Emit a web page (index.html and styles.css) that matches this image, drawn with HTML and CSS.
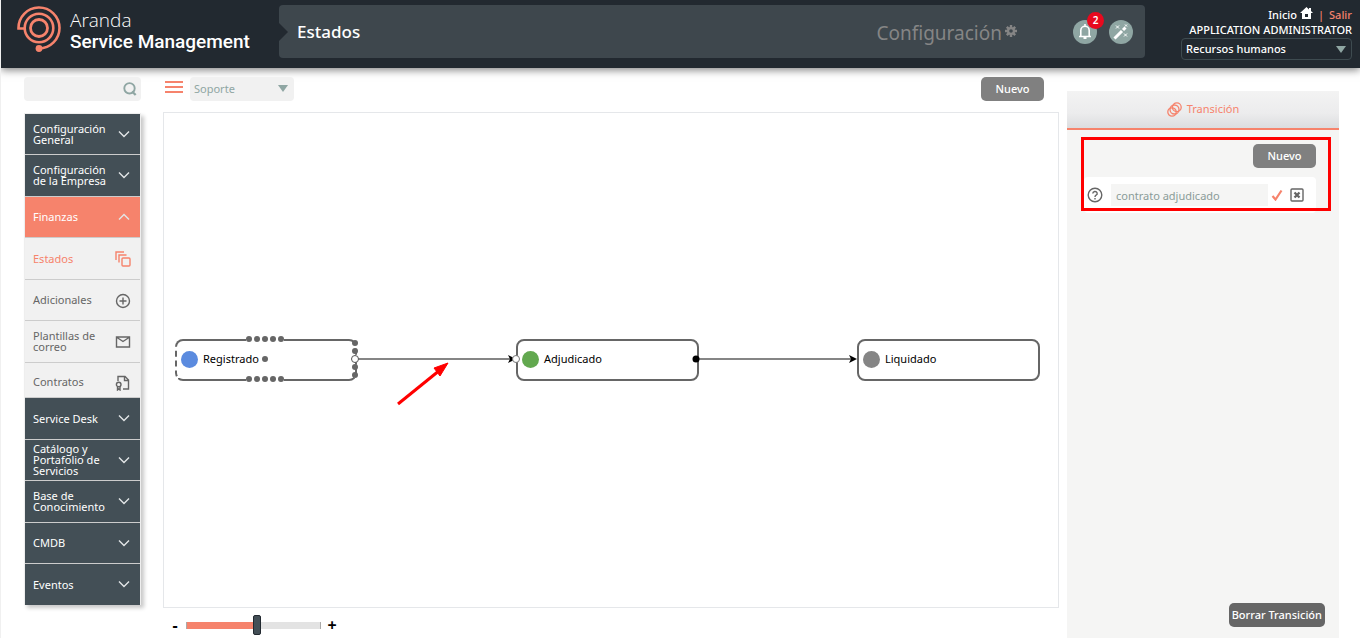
FILE: index.html
```html
<!DOCTYPE html>
<html lang="es">
<head>
<meta charset="utf-8">
<meta name="viewport" content="width=device-width, initial-scale=1">
<title>Aranda Service Management - Estados</title>
<link rel="stylesheet" href="styles.css">
</head>
<body>
<header class="header">
  <div class="brand">
    <svg class="brand-logo" viewBox="0 0 46 48" fill="none" stroke="#f6836c" stroke-width="2.600" aria-hidden="true">
      <circle cx="22" cy="22" r="8.500" stroke-width="2.800"/>
      <circle cx="22" cy="22" r="14.300"/>
      <path d="M8 22.500H1.500A20.500 20.500 0 1 1 22 42.500"/>
      <circle cx="22" cy="42.500" r="3.400" fill="#f6836c" stroke="none"/>
    </svg>
    <div class="brand-name"><span class="brand-light">Aranda</span><strong class="brand-bold">Service Management</strong></div>
  </div>
  <div class="titlebar">
    <h1 class="page-title">Estados</h1>
    <div class="section">Configuración
      <svg class="gear" viewBox="0 0 14 14" aria-hidden="true"><path d="M7 1v12M1 7h12M2.800 2.800l8.400 8.400M11.200 2.800l-8.400 8.400" stroke="#858585" stroke-width="2.400"/><circle cx="7" cy="7" r="4" fill="#858585"/><circle cx="7" cy="7" r="1.800" fill="#3e474d"/></svg>
    </div>
    <div class="tools">
      <button class="round" aria-label="Notificaciones">
        <svg viewBox="0 0 24 24" width="24" height="24" fill="none" stroke="#fff" stroke-width="1.600"><path d="M6 16.500h12M7.800 16V10.500a4.200 4.200 0 0 1 8.400 0V16M12 4v3"/><path d="M10.500 18h3" stroke-width="2"/></svg>
        <span class="badge">2</span>
      </button>
      <button class="round" aria-label="Asistente">
        <svg viewBox="0 0 24 24" width="24" height="24" fill="none" stroke="#fff"><path d="M5.500 18.500l7.500-7.500" stroke-width="3"/><path d="M14 10l2.500-2.500" stroke-width="3"/><path d="M7 5.500l3 3m0-3l-3 3M15 13.500l3 3m0-3l-3 3M16 4.500l2 2m0-2l-2 2" stroke-width="1"/></svg>
      </button>
    </div>
  </div>
  <div class="user">
    <div class="user-links"><a class="home" href="#">Inicio <svg width="13" height="12" viewBox="0 0 13 12" aria-hidden="true"><path d="M6.500 0L0 6h2v6h9V6h2l-2-2V1H9v1.500z" fill="#fff"/><path d="M5 7h3v3H5z" fill="#222930"/></svg></a><span class="sep">|</span><a class="exit" href="#">Salir</a></div>
    <div class="user-name">APPLICATION ADMINISTRATOR</div>
    <div class="select-wrap project">
      <select aria-label="Proyecto"><option>Recursos humanos</option></select>
      <svg class="caret" viewBox="0 0 10 7" aria-hidden="true"><path d="M0 0h10L5 7z" fill="#8fa6a3"/></svg>
    </div>
  </div>
</header>

<svg class="defs" aria-hidden="true"><symbol id="down" viewBox="0 0 12 8"><path d="M1 1.500l5 5 5-5" fill="none" stroke="currentColor" stroke-width="1.400"/></symbol></svg>

<div class="layout">
  <aside class="side">
    <label class="search">
      <input type="search" aria-label="Buscar">
      <svg width="14" height="14" viewBox="0 0 14 14" fill="none" stroke="#8fa6a3" aria-hidden="true"><circle cx="6.500" cy="6.300" r="5.200" stroke-width="1.900"/><path d="M9 9.500l3.700 3.500" stroke-width="2.400"/></svg>
    </label>
    <nav class="menu">
      <button class="item"><span>Configuración General</span><svg class="chev"><use href="#down"/></svg></button>
      <button class="item"><span>Configuración de la Empresa</span><svg class="chev"><use href="#down"/></svg></button>
      <button class="item open"><span>Finanzas</span><svg class="chev up"><use href="#down"/></svg></button>
      <a class="item sub current" href="#"><span>Estados</span><svg class="icon" viewBox="0 0 16 16"><path d="M1 9V1h8M4 11.500V4h7.500"/><rect x="7" y="7" width="8" height="8" rx="1"/></svg></a>
      <a class="item sub" href="#"><span>Adicionales</span><svg class="icon" viewBox="0 0 16 16"><circle cx="8" cy="8" r="6.500"/><path d="M8 4.500v7M4.500 8h7"/></svg></a>
      <a class="item sub" href="#"><span>Plantillas de correo</span><svg class="icon" viewBox="0 0 16 16"><path d="M1.500 3h13v10h-13zM2 3.500l6 4 6-4"/></svg></a>
      <a class="item sub short" href="#"><span>Contratos</span><svg class="icon" viewBox="0 0 16 16"><path d="M3 6V1.500h7l3.500 3.500v9H8M9.500 1.500V5.500h4"/><circle cx="3.700" cy="9.500" r="2.300"/><path d="M2.500 11.500V15l1.300-1L5 15v-3.500"/></svg></a>
      <button class="item"><span>Service Desk</span><svg class="chev"><use href="#down"/></svg></button>
      <button class="item"><span>Catálogo y Portafolio de Servicios</span><svg class="chev"><use href="#down"/></svg></button>
      <button class="item"><span>Base de Conocimiento</span><svg class="chev"><use href="#down"/></svg></button>
      <button class="item"><span>CMDB</span><svg class="chev"><use href="#down"/></svg></button>
      <button class="item"><span>Eventos</span><svg class="chev"><use href="#down"/></svg></button>
    </nav>
  </aside>

  <main class="main">
    <div class="toolbar">
      <button class="burger" aria-label="Menú"><svg width="18" height="13" viewBox="0 0 18 13"><path d="M0 1h18M0 6h18M0 11h18" stroke="#f6836c" stroke-width="2"/></svg></button>
      <div class="select-wrap support">
        <select aria-label="Modelo"><option>Soporte</option></select>
        <svg class="caret" viewBox="0 0 10 7" aria-hidden="true"><path d="M0 0h10L5 7z" fill="#8fa6a3"/></svg>
      </div>
      <button class="btn new-state">Nuevo</button>
    </div>
    <div class="canvas">
      <svg class="links" width="890" height="490" viewBox="0 0 890 490" aria-hidden="true">
        <path d="M191 246h160M532 246h158" stroke="#858585" stroke-width="2"/>
        <path d="M344 242l8 4-8 4 2-4zM685 242l8 4-8 4 2-4z" fill="#000"/>
        <path d="M234 291l42-34" stroke="#f00" stroke-width="3"/>
        <path d="M284 250l-8 13-6-8z" fill="#f00" stroke="#f00"/>
      </svg>
      <div class="node selected n1"><i class="dot blue"></i>Registrado</div>
      <div class="node n2"><i class="dot green"></i>Adjudicado</div>
      <div class="node n3"><i class="dot gray"></i>Liquidado</div>
      <svg class="links" width="890" height="490" viewBox="0 0 890 490" aria-hidden="true">
        <path d="M82 226h38M82 266h38" stroke="#fff" stroke-width="4"/>
        <g fill="#666">
          <circle cx="85" cy="226" r="3"/><circle cx="93" cy="226" r="3"/><circle cx="101" cy="226" r="3"/><circle cx="109" cy="226" r="3"/><circle cx="117" cy="226" r="3"/>
          <circle cx="85" cy="266" r="3"/><circle cx="93" cy="266" r="3"/><circle cx="101" cy="266" r="3"/><circle cx="109" cy="266" r="3"/><circle cx="117" cy="266" r="3"/>
          <circle cx="191" cy="230" r="3"/><circle cx="191" cy="238" r="3"/><circle cx="191" cy="254" r="3"/><circle cx="191" cy="262" r="3"/><circle cx="101" cy="246" r="3"/>
        </g>
        <circle cx="191" cy="246" r="3.500" fill="#fff" stroke="#555"/>
        <circle cx="352" cy="246" r="3.500" fill="#fff" stroke="#777"/>
        <circle cx="532" cy="246" r="3.500" fill="#000"/>
      </svg>
    </div>
    <div class="zoom">
      <button class="zoom-btn" aria-label="Alejar">-</button>
      <input class="range" type="range" min="0" max="100" value="53" aria-label="Zoom">
      <button class="zoom-btn" aria-label="Acercar">+</button>
    </div>
  </main>

  <aside class="panel">
    <h2 class="panel-tab">
      <svg width="15" height="15" viewBox="0 0 15 15" fill="none" stroke="#f6836c" stroke-width="1.300" aria-hidden="true"><circle cx="5" cy="10" r="4.200"/><circle cx="7.500" cy="7.500" r="4.500"/><circle cx="9.800" cy="5.200" r="4.400"/></svg>
      Transición
    </h2>
    <div class="panel-body">
      <button class="btn">Nuevo</button>
      <div class="transition">
        <svg width="16" height="16" viewBox="0 0 16 16" fill="none" stroke="#666" stroke-width="1.400" aria-hidden="true"><circle cx="8" cy="8" r="6.800"/><path d="M5.800 6.500a2.200 2 0 1 1 3.300 1.700Q8 8.800 8 10M8 11v1.400"/></svg>
        <input class="transition-name" type="text" value="contrato adjudicado" aria-label="Nombre de la transición">
        <button class="plain" aria-label="Guardar"><svg width="12" height="12" viewBox="0 0 12 12"><path d="M1.500 7l3 3.500L10.500 1.500" fill="none" stroke="#f6836c" stroke-width="2.200"/></svg></button>
        <button class="plain" aria-label="Cancelar"><svg width="14" height="14" viewBox="0 0 14 14" fill="none" stroke="#666"><rect x="1" y="1" width="12" height="12" rx="1" stroke-width="1.400"/><path d="M4.500 4.500l5 5m0-5l-5 5" stroke-width="2.300"/></svg></button>
      </div>
      <div class="highlight"></div>
    </div>
    <button class="btn delete">Borrar Transición</button>
  </aside>
</div>
</body>
</html>
```

FILE: styles.css
```css
* { box-sizing: border-box; }
body {
  margin: 0;
  min-height: 100vh;
  display: flex;
  flex-direction: column;
  background: #fff;
  border-left: 1px solid #f0f0f0;
  font: 11px/14px "Noto Sans", "Open Sans", sans-serif;
  color: #222;
}
button, input, select { font: inherit; color: inherit; }
button { border: 0; padding: 0; background: none; cursor: pointer; }
a { color: inherit; text-decoration: none; }
svg { display: block; flex: none; }
.defs { display: none; }

.header {
  display: flex;
  min-height: 68px;
  padding-right: 8px;
  background: #222930;
  color: #fff;
  box-shadow: 0 2px 8px rgba(0, 0, 0, .5);
}
.brand { display: flex; width: 278px; padding: 6px 0 0 16px; gap: 7px; }
.brand-logo { width: 46px; height: 48px; }
.brand-name { display: flex; flex-direction: column; padding-top: 3px; font-size: 19px; line-height: 22px; white-space: nowrap; }
.brand-light { font-family: "Open Sans", sans-serif; font-weight: 300; }
.brand-bold { font-family: Roboto, sans-serif; font-weight: 500; }
.titlebar {
  position: relative;
  flex: 1;
  display: flex;
  align-items: center;
  height: 53px;
  margin-top: 5px;
  padding: 0 12px 0 18px;
  background: #3e474d;
  border-radius: 4px;
}
.titlebar::before {
  content: "";
  position: absolute;
  left: 0;
  top: 18px;
  border: 9px solid transparent;
  border-left-color: #222930;
  border-right-width: 0;
}
.page-title { flex: 1; margin: 0; font-size: 17px; line-height: 24px; font-weight: 500; }
.section { display: flex; gap: 2px; font-size: 19px; line-height: 24px; color: #858585; padding-top: 2px; }
.gear { width: 14px; height: 14px; margin-top: 3px; }
.tools { display: flex; gap: 12px; margin-left: 55px; }
.round { position: relative; width: 24px; height: 24px; border-radius: 50%; background: #8fa6a3; }
.badge {
  position: absolute;
  top: -8px;
  right: -7px;
  width: 17px;
  height: 17px;
  border-radius: 50%;
  background: #e8091e;
  color: #fff;
  font-size: 10px;
  line-height: 17px;
  font-weight: 600;
}
.user { width: 207px; padding-top: 7px; display: flex; flex-direction: column; align-items: flex-end; font-weight: 500; white-space: nowrap; }
.user-links { display: flex; gap: 5px; line-height: 15px; }
.home { display: flex; gap: 3px; }
.sep, .exit { color: #f6836c; }
.user-name { line-height: 15px; }
.select-wrap { position: relative; }
.select-wrap select { appearance: none; width: 100%; height: 100%; border: 0; border-radius: 4px; background: none; outline: 0; }
.caret { position: absolute; right: 6px; top: 8px; width: 10px; height: 7px; pointer-events: none; }
.project { width: 171px; height: 22px; margin-top: 1px; }
.project select { padding: 0 4px; border: 1px solid #3e4b50; }

.layout { flex: 1; display: flex; padding: 9px 21px 0 23px; }
.side { width: 117px; margin-right: 22px; }
.search { display: flex; align-items: center; height: 24px; padding-right: 4px; border-radius: 4px; background: #f1f1f1; }
.search input { flex: 1; min-width: 0; border: 0; background: none; outline: 0; appearance: none; }
.menu { margin-top: 12px; border: 1px solid #eee; border-bottom: 0; box-shadow: 3px 3px 4px rgba(0, 0, 0, .22); }
.item {
  display: flex;
  align-items: center;
  justify-content: space-between;
  width: 100%;
  min-height: 41px;
  padding: 0 9px 1px 8px;
  border-bottom: 1px solid #ccc;
  background: #434f56;
  color: #fff;
  line-height: 11px;
  font-weight: 400;
  text-align: left;
}
.item:nth-child(even) { min-height: 42px; }
.item:last-child { min-height: 41px; border-bottom: 0; }
.item span { max-width: 76px; }
.chev { width: 12px; height: 8px; margin-right: 1px; color: #e3e6e7; }
.up { transform: rotate(180deg); }
.item.open { background: #f6836c; }
.item.sub { background: #f1f1f1; color: #666; }
.item.sub span { max-width: 70px; }
.item.current { color: #f6836c; }
.item.short { min-height: 35px; padding-top: 4px; }
.icon { width: 16px; height: 16px; margin-top: 2px; fill: none; stroke: currentColor; stroke-width: 1.4; }

.main { flex: 1; min-width: 0; display: flex; flex-direction: column; }
.toolbar { display: flex; align-items: center; height: 24px; margin-bottom: 11px; padding: 0 15px 0 2px; }
.burger { margin: 0 7px 4px 0; }
.support { width: 104px; height: 24px; }
.support select { padding: 0 4px; background: #f1f1f1; color: #8fa6a3; }
.btn { min-width: 63px; height: 24px; border-radius: 5px; background: #808080; color: #fff; font-weight: 500; }
.new-state { margin-left: auto; }
.canvas { position: relative; flex: 1; min-height: 490px; border: 1px solid #e5e7ea; overflow: hidden; }
.links { position: absolute; left: 0; top: 0; }
.node {
  position: absolute;
  top: 226px;
  display: flex;
  align-items: center;
  gap: 5px;
  width: 183px;
  height: 42px;
  padding: 0 0 2px 4px;
  border: 2px solid #666;
  border-radius: 8px;
  background: #fff;
  color: #000;
}
.selected { border-left: 2px dashed #666; border-right: 2px dashed #666; width: 182px; }
.n1 { left: 11px; }
.n2 { left: 352px; }
.n3 { left: 693px; }
.dot { width: 17px; height: 17px; border-radius: 50%; }
.blue { background: #5b8bdf; }
.green { background: #62a84f; }
.gray { background: #858585; }
.zoom { display: flex; align-items: center; gap: 6px; height: 30px; padding: 4px 0 0 7px; }
.zoom-btn { width: 10px; font-size: 16px; font-weight: 700; color: #000; }
.range { appearance: none; width: 135px; height: 20px; margin: 0; background: none; }
.range::-webkit-slider-runnable-track {
  height: 7px;
  border: solid #aaa;
  border-width: 0 1px;
  background: linear-gradient(90deg, #f6836c 53%, #e3e3e3 53%);
}
.range::-webkit-slider-thumb { appearance: none; width: 8px; height: 20px; margin-top: -7px; border: 1px solid #222930; border-radius: 2px; background: #434f56; }

.panel { display: flex; flex-direction: column; width: 272px; margin: 14px 0 0 8px; background: #f5f5f4; }
.panel-tab {
  display: flex;
  align-items: center;
  justify-content: center;
  gap: 5px;
  height: 39px;
  margin: 0;
  padding-bottom: 1px;
  border-bottom: 2px solid #f6836c;
  background: linear-gradient(#f3f3f3, #ececed 60%, #dcdddf);
  color: #f6836c;
  font-size: 11px;
  font-weight: 400;
}
.panel-body { position: relative; display: flex; flex-direction: column; align-items: flex-end; gap: 9px; padding: 14px 23px 0 17px; }
.transition { display: flex; align-items: center; width: 100%; height: 36px; padding: 0 12px 0 3px; border-radius: 4px; background: #fff; }
.transition-name { flex: 1; min-width: 0; height: 22px; margin: 0 3px 0 8px; padding: 0 5px; border: 0; background: #f5f5f4; color: #8b9c99; outline: 0; }
.plain + .plain { margin-left: 7px; }
.highlight { position: absolute; left: 14px; right: 8px; top: 7px; height: 74px; border: 3px solid #f00; pointer-events: none; }
.delete { align-self: flex-end; margin: auto 14px 11px 0; padding: 0 3px; background: #666; }
```
